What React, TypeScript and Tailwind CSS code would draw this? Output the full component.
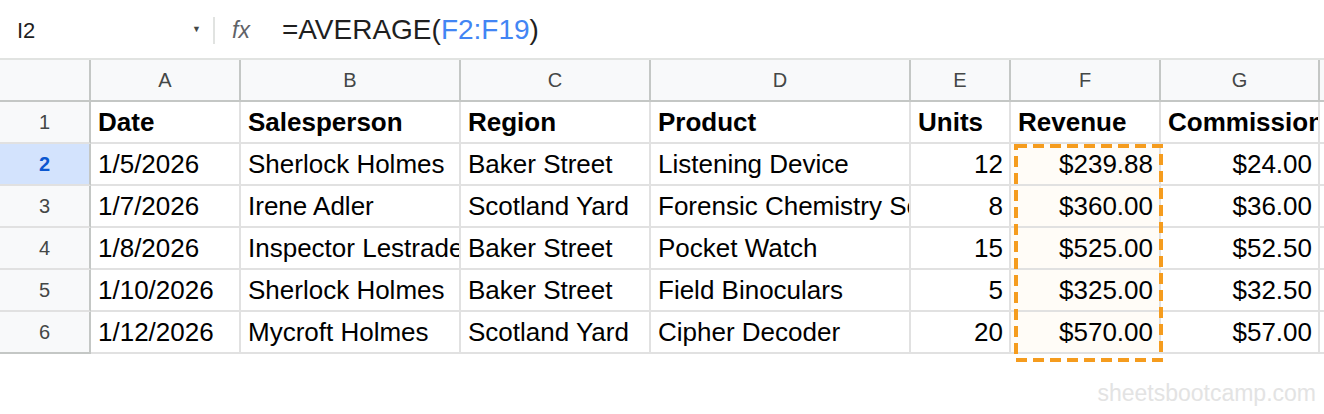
import React from 'react';

type Align = 'left' | 'right';

const columns: { letter: string; width: number; align: Align }[] = [
  { letter: 'A', width: 150, align: 'left' },
  { letter: 'B', width: 220, align: 'left' },
  { letter: 'C', width: 190, align: 'left' },
  { letter: 'D', width: 260, align: 'left' },
  { letter: 'E', width: 100, align: 'right' },
  { letter: 'F', width: 150, align: 'right' },
  { letter: 'G', width: 159, align: 'right' },
  { letter: 'H', width: 60, align: 'left' },
];

const headers = ['Date', 'Salesperson', 'Region', 'Product', 'Units', 'Revenue', 'Commission', ''];

const rows: string[][] = [
  ['1/5/2026', 'Sherlock Holmes', 'Baker Street', 'Listening Device', '12', '$239.88', '$24.00', ''],
  ['1/7/2026', 'Irene Adler', 'Scotland Yard', 'Forensic Chemistry Set', '8', '$360.00', '$36.00', ''],
  ['1/8/2026', 'Inspector Lestrade', 'Baker Street', 'Pocket Watch', '15', '$525.00', '$52.50', ''],
  ['1/10/2026', 'Sherlock Holmes', 'Baker Street', 'Field Binoculars', '5', '$325.00', '$32.50', ''],
  ['1/12/2026', 'Mycroft Holmes', 'Scotland Yard', 'Cipher Decoder', '20', '$570.00', '$57.00', ''],
];

const FormulaBar: React.FC = () => (
  <div className="flex h-[60px] items-center border-b-2 border-[#e1e3e1] bg-white pt-[2px]">
    <div className="flex w-[213px] items-center justify-between pl-[17px] pr-[12px]">
      <span className="text-[22px] text-[#1f1f1f]">I2</span>
      <span className="text-[9px] text-[#444746]">▼</span>
    </div>
    <div className="h-[27px] w-[2px] bg-[#e1e3e1]" />
    <span className="ml-[17px] text-[23px] italic text-[#5f6368]">fx</span>
    <span className="ml-[32px] text-[28px] leading-none text-[#1f1f1f]">
      =AVERAGE(<span className="text-[#4285f4]">F2:F19</span>)
    </span>
  </div>
);

const App: React.FC = () => {
  return (
    <div className="relative h-[414px] w-[1324px] overflow-hidden bg-white font-['Liberation_Sans',Arial,sans-serif]">
      <FormulaBar />

      {/* Column headers */}
      <div className="flex h-[42px] border-b-2 border-[#c4c7c5] bg-[#f8f9fa]">
        <div className="w-[91px] shrink-0 border-r-2 border-[#c4c7c5]" />
        {columns.map((c) => (
          <div
            key={c.letter}
            style={{ width: c.width }}
            className="flex shrink-0 items-center justify-center border-r-2 border-[#c4c7c5] text-[20px] text-[#444746]"
          >
            {c.letter}
          </div>
        ))}
      </div>

      {/* Header row */}
      <div className="flex h-[42px]">
        <div className="flex w-[91px] shrink-0 items-center justify-center border-r-2 border-b-2 border-[#c4c7c5] border-b-[#e1e1e1] bg-[#f8f9fa] text-[20px] text-[#444746]">
          1
        </div>
        {columns.map((c, i) => (
          <div
            key={c.letter}
            style={{ width: c.width }}
            className="flex shrink-0 items-center overflow-hidden whitespace-nowrap border-r-2 border-b-2 border-[#e1e1e1] pl-[7px] pr-[6px] pt-[1px] text-[26px] font-bold text-black"
          >
            {headers[i]}
          </div>
        ))}
      </div>

      {/* Data rows */}
      {rows.map((row, r) => {
        const active = r === 0;
        return (
          <div key={r} className="flex h-[42px]">
            <div
              className={`flex w-[91px] shrink-0 items-center justify-center border-r-2 border-b-2 border-[#c4c7c5] text-[20px] ${
                active
                  ? 'border-b-[#e1e1e1] bg-[#d3e3fd] font-bold text-[#0b57d0]'
                  : r === rows.length - 1
                  ? 'bg-[#f8f9fa] text-[#444746]'
                  : 'border-b-[#e1e1e1] bg-[#f8f9fa] text-[#444746]'
              }`}
            >
              {r + 2}
            </div>
            {columns.map((c, i) => (
              <div
                key={c.letter}
                style={{ width: c.width }}
                className={`flex shrink-0 items-center overflow-hidden whitespace-nowrap border-r-2 border-b-2 border-[#e1e1e1] pl-[7px] pr-[6px] pt-[1px] text-[26px] text-black ${
                  c.align === 'right' ? 'justify-end' : 'justify-start'
                } ${c.letter === 'F' ? 'bg-[#fffcf7]' : ''}`}
              >
                {row[i]}
              </div>
            ))}
          </div>
        );
      })}

      {/* Copy selection marching ants around F2:F6 */}
      <svg className="pointer-events-none absolute left-[1012px] top-[142px]" width="154" height="222">
        <rect
          x="4"
          y="4"
          width="145"
          height="214"
          fill="none"
          stroke="#f59c1e"
          strokeWidth="4"
          strokeDasharray="11 6"
        />
      </svg>

      <div className="absolute bottom-[4px] right-[8px] text-[23px] text-[#e3e3e3]">sheetsbootcamp.com</div>
    </div>
  );
};

export default App;
